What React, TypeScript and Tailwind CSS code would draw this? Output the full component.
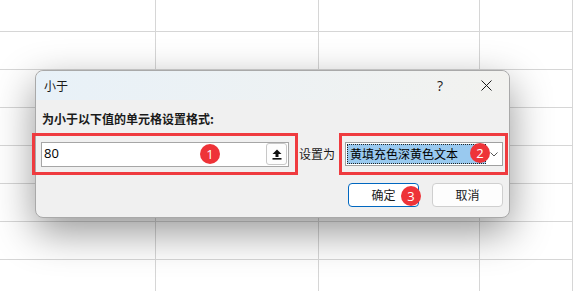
import React from 'react';

const cols = ['w-[156px]', 'w-[163px]', 'w-[161px]', 'flex-1'];
const rows = ['h-[32px]', 'h-[38px]', 'h-[38px]', 'h-[38px]', 'h-[38px]', 'h-[38px]', 'h-[38px]', 'h-[38px]'];

const Badge: React.FC<{ n: number; className: string }> = ({ n, className }) => (
  <span
    className={`absolute w-[20px] h-[20px] rounded-full bg-[#ee3338] text-white text-[13px] leading-none flex items-center justify-center font-['Open_Sans',sans-serif] ${className}`}
  >
    {n}
  </span>
);

const App: React.FC = () => {
  return (
    <div className="relative w-[573px] h-[291px] overflow-hidden bg-white font-['Noto_Sans_CJK_SC','Noto_Sans',sans-serif] text-[12px] text-[#1a1a1a]">
      {/* sheet grid behind the dialog */}
      <div className="flex flex-col">
        {rows.map((h, r) => (
          <div key={r} className={`flex ${h}`}>
            {cols.map((w, c) => (
              <div key={c} className={`${w} border-r border-b border-[#d6d6d6]`} />
            ))}
          </div>
        ))}
      </div>

      {/* dialog */}
      <div className="absolute left-[35px] top-[70px] w-[475px] h-[148px] rounded-[8px] border border-[#a9a9a9] bg-[#f0f0f0] shadow-[0_14px_40px_rgba(0,0,0,0.42)] flex flex-col">
        <div className="h-[29px] flex items-center rounded-t-[8px] bg-gradient-to-r from-[#e8f1f8] to-[#f2f2ef] pl-[8px]">
          <span className="text-[12px]">小于</span>
          <div className="ml-auto flex h-full">
            <div className="w-[46px] flex items-center justify-center text-[14px] font-['Open_Sans',sans-serif]">?</div>
            <div className="w-[46px] flex items-center justify-center">
              <svg width="11" height="11" viewBox="0 0 11 11" fill="none" stroke="#1a1a1a" strokeWidth="1">
                <path d="M0.5 0.5 L10.5 10.5 M10.5 0.5 L0.5 10.5" />
              </svg>
            </div>
          </div>
        </div>

        <div className="mt-[10px] pl-[6px] h-[18px] leading-[18px] font-bold">为小于以下值的单元格设置格式:</div>

        <div className="mt-[5px] ml-[-4px] flex items-center h-[42px]">
          <div className="relative w-[266px] h-[42px] border-[3px] border-[#ef3b3f] pl-[6px] flex items-center">
            <div className="w-[248px] h-[25px] border border-[#a6a6a6] bg-white flex items-center">
              <span className="pl-[2px] text-[13px] font-['Open_Sans',sans-serif] text-black">80</span>
              <div className="ml-auto mr-[1px] w-[21px] h-[22px] rounded-[3px] border border-[#c8c8c8] bg-[#fdfdfd] flex items-center justify-center">
                <svg width="10" height="11" viewBox="0 0 10 11" fill="#111">
                  <path d="M5 0.5 L9.5 5 H6.5 V8 H3.5 V5 H0.5 Z" />
                  <rect x="0.5" y="9" width="9" height="1.6" />
                </svg>
              </div>
            </div>
            <Badge n={1} className="left-[165px] top-[8px]" />
          </div>

          <span className="ml-[1px] w-[40px] text-[12px]">设置为</span>

          <div className="relative w-[169px] h-[42px] border-[3px] border-[#ef3b3f] pl-[3px] flex items-center">
            <div className="w-[158px] h-[24px] border border-[#a0a0a0] bg-white flex items-center p-[1px]">
              <div className="h-full w-[139px] bg-[#99c9ef] border border-dotted border-[#222] flex items-center pl-[2px] text-black">
                黄填充色深黄色文本
              </div>
              <div className="flex-1 flex items-center justify-center">
                <svg width="8" height="5" viewBox="0 0 8 5" fill="none" stroke="#555" strokeWidth="1">
                  <path d="M0.5 0.5 L4 4 L7.5 0.5" />
                </svg>
              </div>
            </div>
            <Badge n={2} className="left-[128px] top-[7px]" />
          </div>
        </div>

        <div className="mt-[8px] flex justify-end gap-[13px] pr-[6px]">
          <div className="relative w-[71px] h-[24px] rounded-[4px] border border-[#0067c0] bg-white flex items-center justify-center">
            确定
            <Badge n={3} className="left-[52px] top-[2px]" />
          </div>
          <div className="w-[71px] h-[24px] rounded-[4px] border border-[#cfcfcf] bg-[#fdfdfd] flex items-center justify-center">
            取消
          </div>
        </div>
      </div>
    </div>
  );
};

export default App;
